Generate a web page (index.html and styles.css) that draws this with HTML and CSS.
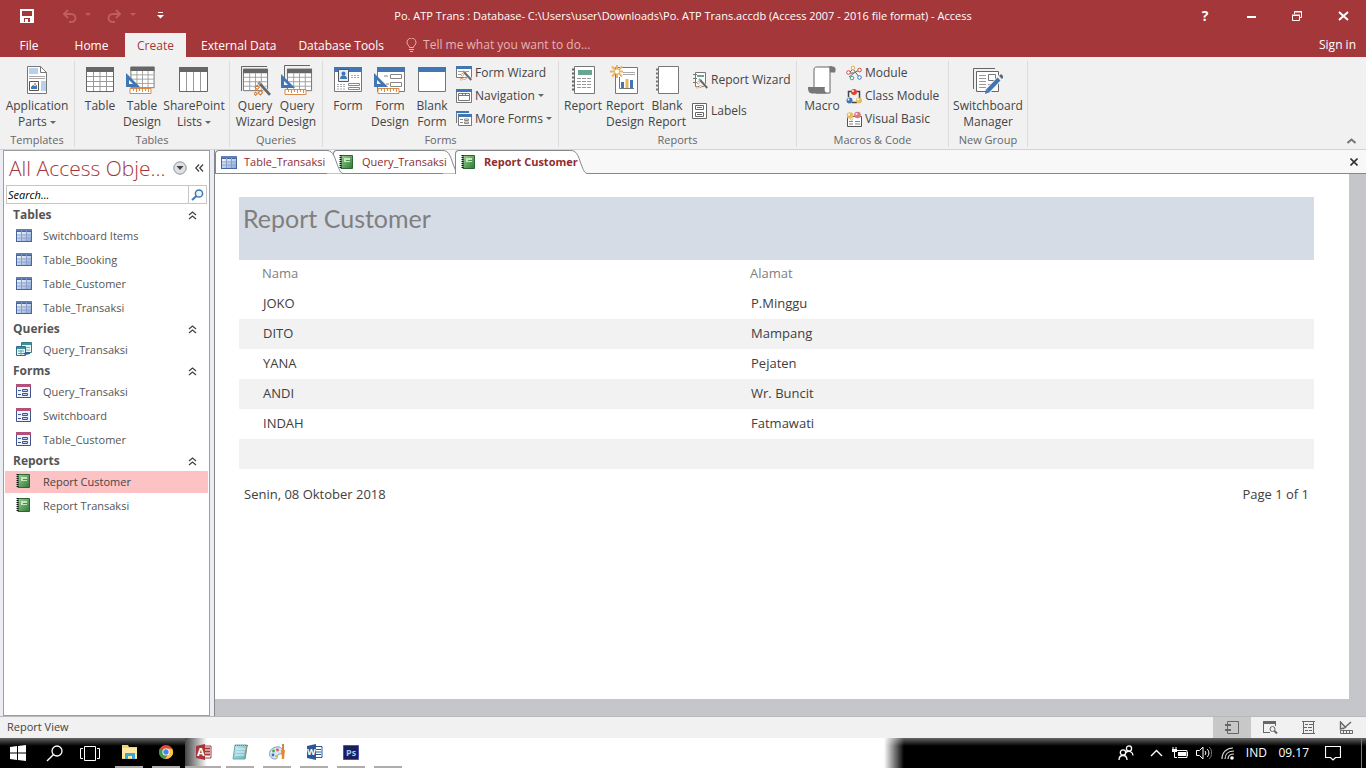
FILE: index.html
```html
<!DOCTYPE html>
<html lang="en">
<head>
<meta charset="utf-8">
<title>Po. ATP Trans : Database - Access</title>
<link rel="stylesheet" href="styles.css">
</head>
<body>
<svg class="defs" aria-hidden="true">
  <defs>
    <linearGradient id="g-blue" x1="0" y1="0" x2="1" y2="1"><stop offset="0" stop-color="#f4f8ff"/><stop offset="1" stop-color="#8ba9dc"/></linearGradient>
    <linearGradient id="g-green" x1="0" y1="0" x2="1" y2="1"><stop offset="0" stop-color="#9fce96"/><stop offset="1" stop-color="#2c7a34"/></linearGradient>
    <linearGradient id="g-pad" x1="0" y1="0" x2="1" y2="1"><stop offset="0" stop-color="#c8eef2"/><stop offset="1" stop-color="#62adbb"/></linearGradient>
  </defs>
  <symbol id="i-table" viewBox="0 0 16 13"><path d="M0 0h16v13H0z" fill="#4664a0"/><path d="M1 3h14v9H1z" fill="url(#g-blue)"/><path d="M0 1h16" stroke="#7f98c8"/><path d="M1 6h14M1 9h14M5.500 2v10M10.500 2v10" stroke="#8a9fc8" fill="none"/></symbol>
  <symbol id="i-query" viewBox="0 0 16 15"><path d="M5.500.5h10v10h-10z" fill="#eaf6f6" stroke="#2f7f87"/><path d="M6 1h9v2H6z" fill="#3b9199"/><path d="M8 5.500h6M8 8h6" stroke="#79b3b8"/><path d="M.5 4.500h9v9h-9z" fill="#eaf6f6" stroke="#2f6f87"/><path d="M1 5h8v2H1z" fill="#3b9199"/><path d="M2 9h6M2 11.500h6M5 8v5" stroke="#669eae" fill="none"/><path d="m7 11 7-1v2l-5 1z" fill="#315e9d"/></symbol>
  <symbol id="i-form" viewBox="0 0 15 14"><path d="M.5.500h14v13H.5z" fill="#f0f3fb" stroke="#3f568b"/><path d="M0 0h15v3H0z" fill="#b2517a"/><path d="M2 6.500h3M2 10.500h3" stroke="#3f568b"/><path d="M6.500 5.500h5v2h-5zM6.500 9.500h5v2h-5z" fill="#c4d2ef" stroke="#3f568b"/></symbol>
  <symbol id="i-report" viewBox="0 0 14 14"><path d="M2 .5h11.500v13H2z" fill="url(#g-green)" stroke="#2c6632"/><path d="M5 3h6v4H5z" fill="#c7e6bd"/><path d="M7 5h4v1H7z" fill="#4b8c48"/><path d="M1.500 0v14" stroke="#111" stroke-width="2" stroke-dasharray="1 1"/></symbol>
  <symbol id="i-up" viewBox="0 0 9 9"><path d="m1 4 3.500-3L8 4M1 8l3.500-3L8 8" fill="none" stroke="#444" stroke-width="1.300"/></symbol>
  <symbol id="i-grid" viewBox="0 0 30 28"><path d="M1.500 2.500h27v24h-27z" fill="#fff" stroke="#666"/><path d="M1 2h28v5H1z" fill="#666"/><path d="M2 11.500h26M2 16.500h26M2 21.500h26M8.500 7v19M15 7v19M21.500 7v19" stroke="#999" fill="none"/></symbol>
  <symbol id="i-ruler" viewBox="0 0 30 30"><path d="M0 8v14h14z" fill="#3f76b3"/><path d="M3 15v4h4z" fill="#fff"/><path d="M4 23.500h21v5H4z" fill="#fff" stroke="#d88b4b"/><path d="M7.500 24v2M10.500 24v3M13.500 24v2M16.500 24v3M19.500 24v2M22.500 24v3" stroke="#d88b4b"/></symbol>
  <symbol id="i-wand" viewBox="0 0 16 14"><path d="m5 2 10 11" stroke="#f1f1f1" stroke-width="4"/><path d="m4 1 3 3" stroke="#999" stroke-width="3"/><path d="m6 3 9 10" stroke="#666" stroke-width="2.500"/><path d="m1 6 2-2 2 2-2 2zM4 11l2-2 2 2-2 2zM0 12l1.500-1.500L3 12l-1.500 1.500z" fill="#fff" stroke="#d47a37"/></symbol>
  <symbol id="i-people" viewBox="0 0 16 16"><circle cx="5" cy="7.500" r="2.700" fill="none" stroke="#fff" stroke-width="1.300"/><path d="M1 15c0-6 8-6 8 0M8 7.500c3-3 7 0 7 3" fill="none" stroke="#fff" stroke-width="1.300"/><circle cx="11" cy="3.500" r="2.600" fill="none" stroke="#fff" stroke-width="1.300"/></symbol>
</svg>

<div class="app">
  <header class="titlebar">
    <div class="quick">
      <button aria-label="Save"><svg width="14" height="14"><path d="M1 1h12v12H1z" fill="none" stroke="#fff" stroke-width="2"/><path d="M1 7h12v6H1z" fill="#fff"/><path d="M4 9h6v4H4z" fill="#a4373a"/><path d="M5 10h3v4H5z" fill="#fff"/></svg></button>
      <button class="undo" aria-label="Undo"><svg width="30" height="14"><path d="m6 1-4 4 4 4M2 5h7c6 0 6 8 0 8H7" fill="none" stroke="#c05b5f" stroke-width="2"/><path d="M23 4h6l-3 3z" fill="#c05b5f"/></svg></button>
      <button class="redo" aria-label="Redo"><svg width="30" height="14"><path d="m9 1 4 4-4 4m4-4H6c-6 0-6 8 0 8h2" fill="none" stroke="#c05b5f" stroke-width="2"/><path d="M23 4h6l-3 3z" fill="#c05b5f"/></svg></button>
      <button class="customize" aria-label="Customize Quick Access Toolbar"><svg width="7" height="7"><path d="M1 .5h5" stroke="#fff"/><path d="M0 3h7L3.500 6.500z" fill="#fff"/></svg></button>
    </div>
    <h1 class="doc-title">Po. ATP Trans : Database- C:\Users\user\Downloads\Po. ATP Trans.accdb (Access 2007 - 2016 file format) - Access</h1>
    <div class="window-buttons">
      <button aria-label="Help" class="help">?</button>
      <button aria-label="Minimize"><svg width="10" height="10"><path d="M1 6h9" stroke="#fff" stroke-width="2"/></svg></button>
      <button aria-label="Restore"><svg width="10" height="10"><path d="M2.500 3V.5h7v6H8M2 1h8" fill="none" stroke="#fff"/><path d="M.5 4.500h7v5h-7zM0 4h8" fill="none" stroke="#fff"/></svg></button>
      <button aria-label="Close"><svg width="11" height="10"><path d="m1 1 9 8M10 1 1 9" stroke="#fff" stroke-width="2"/></svg></button>
    </div>
  </header>

  <nav class="ribbon-tabs">
    <button class="rtab file">File</button>
    <button class="rtab home">Home</button>
    <button class="rtab active">Create</button>
    <button class="rtab">External Data</button>
    <button class="rtab">Database Tools</button>
    <label class="tell"><svg width="11" height="15"><path d="M3.500 9.500C3.500 7.500 1 7 1 4.500a4 4 0 0 1 9 0C10 7 7.500 7.500 7.500 9.500z" fill="none" stroke="#e3b5b6"/><path d="M3 11.500h5M4 13.500h3" stroke="#e3b5b6"/></svg><input type="text" placeholder="Tell me what you want to do..." aria-label="Tell me what you want to do"></label>
    <a class="signin" href="#">Sign in</a>
  </nav>

  <section class="ribbon">
    <div class="group g-templates"><div class="tools">
      <button class="big wide"><svg width="30" height="30" class="ic"><path d="M5.500 1.500h13l6 6v21h-19z" fill="#fff" stroke="#777"/><path d="M18.500 1.500v6h6" fill="none" stroke="#777"/><path d="M7 3h9v6H7zM19 16h5v10h-5z" fill="#b8d0ea"/><path d="M7 11.500h16M7 13.500h16" stroke="#aaa"/><path d="M7.500 16.500h9v9h-9z" fill="#fff" stroke="#555"/><path d="M9 24v-2l2-2 2 1 2-1v4z" fill="#3f76b3"/><path d="M12 18h2v2h-2z" fill="#e5a14e"/></svg><span>Application<br>Parts <i class="caret"></i></span></button>
    </div><h2>Templates</h2></div>

    <div class="group g-tables"><div class="tools">
      <button class="big"><svg width="30" height="30" class="ic"><use href="#i-grid" width="30" height="28"/></svg><span>Table</span></button>
      <button class="big"><svg width="32" height="30" class="ic"><use href="#i-grid" x="2" width="29" height="24" preserveAspectRatio="none"/><use href="#i-ruler" width="30" height="30"/></svg><span>Table<br>Design</span></button>
      <button class="big wide"><svg width="30" height="30" class="ic"><path d="M.5 2.500h28v24H.5z" fill="#fff" stroke="#666"/><path d="M0 2h29v5H0z" fill="#666"/><path d="M7.500 7v19M14.500 7v19M21.500 7v19" stroke="#999"/></svg><span>SharePoint<br>Lists <i class="caret"></i></span></button>
    </div><h2>Tables</h2></div>

    <div class="group g-queries"><div class="tools">
      <button class="big"><svg width="32" height="32" class="ic"><path d="M2.500 26V1.500H28" fill="none" stroke="#666"/><use href="#i-grid" x="3" y="2" width="27" height="25"/><use href="#i-wand" x="15" y="16" width="17" height="15"/></svg><span>Query<br>Wizard</span></button>
      <button class="big"><svg width="32" height="32" class="ic"><path d="M3.500 20V.5H29" fill="none" stroke="#666"/><use href="#i-grid" x="5" y="2" width="27" height="25"/><use href="#i-ruler" x="0" y="1" width="30" height="30"/></svg><span>Query<br>Design</span></button>
    </div><h2>Queries</h2></div>

    <div class="group g-forms"><div class="tools">
      <button class="big"><svg width="30" height="30" class="ic"><path d="M1.500 2.500h27v24h-27z" fill="#fff" stroke="#777"/><path d="M1 2h28v5H1z" fill="#3f76b3"/><path d="M5.500 4.500h10v12h-10z" fill="#e4eef9" stroke="#555"/><circle cx="10.500" cy="8.500" r="2" fill="#3f76b3"/><path d="M7 14c0-5 7-5 7 0z" fill="#3f76b3"/><path d="M18 10.500h9M18 12.500h9M4 19.500h9M4 21.500h9M4 24h9" stroke="#aaa" stroke-dasharray="2 1"/><path d="M15.500 18.500h11v2h-11zM15.500 22.500h11v2h-11z" fill="none" stroke="#888"/></svg><span>Form</span></button>
      <button class="big"><svg width="32" height="30" class="ic"><path d="M3.500 2.500h27v24h-27z" fill="#fff" stroke="#777"/><path d="M3 2h28v5H3z" fill="#3f76b3"/><path d="M16.500 9.500h11v4h-11zM16.500 17.500h11v4h-11z" fill="none" stroke="#888"/><path d="M10 11h4M12 19h3" stroke="#888"/><use href="#i-ruler" width="30" height="30"/></svg><span>Form<br>Design</span></button>
      <button class="big"><svg width="30" height="30" class="ic"><path d="M1.500 2.500h27v24h-27z" fill="#fff" stroke="#777"/><path d="M1 2h28v5H1z" fill="#3f76b3"/></svg><span>Blank<br>Form</span></button>
      <div class="stack">
        <button class="small"><svg width="16" height="16"><path d="M.5 1.500h15v11H.5z" fill="#fff" stroke="#777"/><path d="M0 1h16v3H0z" fill="#3f76b3"/><path d="M2 6.500h5M2 9.500h3M9 6.500h4" stroke="#999"/><use href="#i-wand" x="4" y="5" width="12" height="11"/></svg>Form Wizard</button>
        <button class="small"><svg width="16" height="16"><path d="M.5 1.500h15v13H.5z" fill="#fff" stroke="#777"/><path d="M0 1h16v3H0z" fill="#3f76b3"/><path d="M2.500 5.500h11v7h-11zM3 7.500h10M6.500 6v2M9.500 6v2" fill="none" stroke="#777"/></svg>Navigation <i class="caret"></i></button>
        <button class="small"><svg width="16" height="16"><path d="M.5 12V1.500H13" fill="none" stroke="#777"/><path d="M2.500 3.500h13v11h-13z" fill="#fff" stroke="#777"/><path d="M0 0h13v2H0zM2 3h14v3H2z" fill="#3f76b3"/><path d="M4 8.500h3M4 11.500h3M8.500 8h4v1.500h-4zM8.500 11h4v1.500h-4z" fill="none" stroke="#888"/></svg>More Forms <i class="caret"></i></button>
      </div>
    </div><h2>Forms</h2></div>

    <div class="group g-reports"><div class="tools">
      <button class="big"><svg width="26" height="30" class="ic"><path d="M4.500 1.500h20v27h-20z" fill="#fff" stroke="#777"/><path d="M8 5h14v5H8z" fill="#6aa58f"/><path d="M7 13.500h15M7 16.500h15M7 19.500h15M7 22.500h15" stroke="#999" stroke-dasharray="4 1"/><path d="M2 4.500h4M2 8.500h4M2 12.500h4M2 16.500h4M2 20.500h4M2 24.500h4" stroke="#666" stroke-width="2" stroke-dasharray="3 1"/></svg><span>Report</span></button>
      <button class="big"><svg width="30" height="30" class="ic"><path d="M5.500 2.500h22v26h-22z" fill="#fff" stroke="#777"/><path d="M13 7.500h12M13 9.500h12" stroke="#aaa"/><path d="M9.500 12v11.500H24" stroke="#777" fill="none"/><path d="M11 17h3v6h-3zM20 15h3v8h-3z" fill="#3f76b3"/><path d="M15.500 14h3v9h-3z" fill="#e8b566"/><path d="M7 0v13M0 6.500h13M2 1.500l10 10M12 1.500l-10 10" stroke="#e8b566" stroke-width="2"/><circle cx="7" cy="6.500" r="2" fill="#fff"/></svg><span>Report<br>Design</span></button>
      <button class="big"><svg width="26" height="30" class="ic"><path d="M4.500 1.500h20v27h-20z" fill="#fff" stroke="#777"/><path d="M2 4.500h4M2 8.500h4M2 12.500h4M2 16.500h4M2 20.500h4M2 24.500h4" stroke="#777" stroke-width="2" stroke-dasharray="3 1"/></svg><span>Blank<br>Report</span></button>
      <div class="stack two">
        <button class="small"><svg width="16" height="18"><path d="M3.500 1.500h10v14h-10z" fill="#fff" stroke="#777"/><path d="M5 4h7v2H5z" fill="#6aa58f"/><path d="M1 3.500h4M1 7.500h4M1 11.500h4" stroke="#777"/><use href="#i-wand" x="4" y="7" width="12" height="11"/></svg>Report Wizard</button>
        <button class="small"><svg width="16" height="16"><path d="M.5.500h14v15H.5z" fill="#fff" stroke="#666"/><path d="M3.500 2.500h8v4h-8zM3.500 9.500h8v4h-8zM5 4.500h5M5 11.500h5" fill="none" stroke="#666"/></svg>Labels</button>
      </div>
    </div><h2>Reports</h2></div>

    <div class="group g-macros"><div class="tools">
      <button class="big"><svg width="30" height="30" class="ic"><path d="M7 24V5c0-3 2-3 3-3h15c-3 0-2 4-2 7v19H9z" fill="#fff" stroke="#666"/><path d="M21 1.500h5c3 0 3 4 2 6h-5c0-3 0-5-2-6zM1 22h17c-1 3 0 6 3 6.500H6c-4 0-5-2-5-6.500z" fill="#777"/></svg><span>Macro</span></button>
      <div class="stack">
        <button class="small"><svg width="16" height="16"><path d="m3 8 4-4 6 8M3 12l5-4 5-3M3 8l5 0" stroke="#666" fill="none"/><g fill="#fff"><circle cx="2.500" cy="7.500" r="1.800" stroke="#d24b38"/><circle cx="7" cy="3" r="1.800" stroke="#e0ad4f"/><circle cx="13.500" cy="5" r="1.800" stroke="#d24b38"/><circle cx="6" cy="13" r="1.800" stroke="#49a18a"/><circle cx="13.500" cy="12.500" r="1.800" stroke="#3f76b3"/></g></svg>Module</button>
        <button class="small"><svg width="16" height="16"><path d="M5 3.500H2.500V9M11 3.500h2.500V10M6 14.500h5" stroke="#444" fill="none" stroke-width="1.500"/><circle cx="8" cy="4" r="3" fill="#d9482f"/><circle cx="3.500" cy="12.500" r="3" fill="#3f76b3"/><circle cx="13" cy="12.500" r="3" fill="#e8bd5c"/><g fill="#fff"><circle cx="7" cy="3" r="1"/><circle cx="2.500" cy="11.500" r="1"/><circle cx="12" cy="11.500" r="1"/></g></svg>Class Module</button>
        <button class="small"><svg width="16" height="16"><path d="M1.500 5.500h14v10h-14z" fill="#fff" stroke="#555"/><path d="M3 10.500h4M9 10.500h5M3 13h4M9 13h5" stroke="#888"/><circle cx="4" cy="4.500" r="3.300" fill="#e8bd5c"/><circle cx="11.500" cy="4" r="3.300" fill="#df7587"/><circle cx="3" cy="3.500" r="1" fill="#fff"/><circle cx="10.500" cy="3" r="1" fill="#fff"/><path d="m4 7.500 1.500 2 1.500-2" stroke="#e8bd5c" fill="none"/></svg>Visual Basic</button>
      </div>
    </div><h2>Macros &amp; Code</h2></div>

    <div class="group g-new"><div class="tools">
      <button class="big manager"><svg width="30" height="30" class="ic"><path d="M.5 24V3.500H22" fill="none" stroke="#666"/><path d="M3.500 6.500h22v20h-22z" fill="#fff" stroke="#666"/><path d="M6 10.500h7M6 13.500h7M6 16.500h7M6 19.500h7M6 22.500h7M15 19.500h4" stroke="#999"/><path d="M15.500 9.500h7v6h-7z" fill="#fff" stroke="#777"/><path d="m28 12-14 15" stroke="#f1f1f1" stroke-width="6"/><path d="M26 14 15 25.500" stroke="#3f76b3" stroke-width="4"/><path d="m27.500 12.500 2-2" stroke="#666" stroke-width="4"/><path d="m13 24 4 3-5 2z" fill="#3f76b3"/></svg><span>Switchboard<br>Manager</span></button>
    </div><h2>New Group</h2></div>
    <button class="collapse" aria-label="Collapse the ribbon"><svg width="9" height="6"><path d="m.5 5 4-3.500 4 3.500" fill="none" stroke="#777" stroke-width="2"/></svg></button>
  </section>

  <div class="workspace">
    <aside class="nav">
      <div class="nav-head"><h2>All Access Obje...</h2>
        <button aria-label="Navigation options"><svg width="14" height="14"><circle cx="7" cy="7" r="6.200" fill="#dfe0e3" stroke="#8d9096"/><path d="M3.500 5h7L7 9z" fill="#444"/></svg></button>
        <button aria-label="Shutter bar"><svg width="9" height="8"><path d="M4 .5.800 4 4 7.500M8 .5 4.800 4 8 7.500" fill="none" stroke="#444" stroke-width="1.300"/></svg></button>
      </div>
      <div class="search"><input type="text" placeholder="Search..." aria-label="Search"><button aria-label="Search"><svg width="13" height="12"><circle cx="8" cy="4.500" r="3.600" fill="#eef5fc" stroke="#3f76b3" stroke-width="1.500"/><path d="M5.500 7 1 11" stroke="#3f76b3" stroke-width="2"/></svg></button></div>
      <h3>Tables<svg width="9" height="9"><use href="#i-up"/></svg></h3>
      <ul>
        <li><a href="#"><svg width="16" height="15"><use href="#i-table" height="13"/></svg>Switchboard Items</a></li>
        <li><a href="#"><svg width="16" height="15"><use href="#i-table" height="13"/></svg>Table_Booking</a></li>
        <li><a href="#"><svg width="16" height="15"><use href="#i-table" height="13"/></svg>Table_Customer</a></li>
        <li><a href="#"><svg width="16" height="15"><use href="#i-table" height="13"/></svg>Table_Transaksi</a></li>
      </ul>
      <h3>Queries<svg width="9" height="9"><use href="#i-up"/></svg></h3>
      <ul><li><a href="#"><svg width="16" height="16"><use href="#i-query" height="15"/></svg>Query_Transaksi</a></li></ul>
      <h3>Forms<svg width="9" height="9"><use href="#i-up"/></svg></h3>
      <ul>
        <li><a href="#"><svg width="16" height="16"><use href="#i-form" width="15" height="14"/></svg>Query_Transaksi</a></li>
        <li><a href="#"><svg width="16" height="16"><use href="#i-form" width="15" height="14"/></svg>Switchboard</a></li>
        <li><a href="#"><svg width="16" height="16"><use href="#i-form" width="15" height="14"/></svg>Table_Customer</a></li>
      </ul>
      <h3>Reports<svg width="9" height="9"><use href="#i-up"/></svg></h3>
      <ul>
        <li><a href="#" class="selected"><svg width="16" height="16"><use href="#i-report" width="14" height="14"/></svg>Report Customer</a></li>
        <li><a href="#"><svg width="16" height="16"><use href="#i-report" width="14" height="14"/></svg>Report Transaksi</a></li>
      </ul>
    </aside>

    <main class="document">
      <div class="doc-tabs">
        <button class="dtab first"><svg width="16" height="13"><use href="#i-table"/></svg><span>Table_Transaksi</span><svg class="edge" width="18" height="24"><path d="M0 .5c7 0 8 9 11 16 2 5 3 7 6 7H0z" fill="#fff"/><path d="M0 .5c7 0 8 9 11 16 2 5 3 7 6 7" fill="none" stroke="#85888c"/></svg></button>
        <button class="dtab"><svg width="14" height="14"><use href="#i-report"/></svg><span>Query_Transaksi</span><svg class="edge" width="18" height="24"><path d="M0 .5c7 0 8 9 11 16 2 5 3 7 6 7H0z" fill="#fff"/><path d="M0 .5c7 0 8 9 11 16 2 5 3 7 6 7" fill="none" stroke="#85888c"/></svg></button>
        <button class="dtab current"><svg width="14" height="14"><use href="#i-report"/></svg><span>Report Customer</span><svg class="edge" width="18" height="24"><path d="M0 .5c7 0 8 9 11 16 2 5 3 7 6 7V24H0z" fill="#fff"/><path d="M0 .5c7 0 8 9 11 16 2 5 3 7 6 7" fill="none" stroke="#85888c"/></svg></button>
        <button class="close-doc" aria-label="Close document"><svg width="8" height="8"><path d="m.5.500 7 7M7.500.5l-7 7" stroke="#333" stroke-width="1.600"/></svg></button>
      </div>
      <div class="canvas">
        <article class="page">
          <h2 class="report-title">Report Customer</h2>
          <table>
            <colgroup><col class="c-name"><col></colgroup>
            <thead><tr><th scope="col">Nama</th><th scope="col">Alamat</th></tr></thead>
            <tbody>
              <tr><td>JOKO</td><td>P.Minggu</td></tr>
              <tr><td>DITO</td><td>Mampang</td></tr>
              <tr><td>YANA</td><td>Pejaten</td></tr>
              <tr><td>ANDI</td><td>Wr. Buncit</td></tr>
              <tr><td>INDAH</td><td>Fatmawati</td></tr>
              <tr><td></td><td></td></tr>
            </tbody>
          </table>
          <footer><span>Senin, 08 Oktober 2018</span><span>Page 1 of 1</span></footer>
        </article>
      </div>
    </main>
  </div>

  <footer class="status"><span>Report View</span>
    <div class="views">
      <button class="on" aria-label="Report View"><svg width="14" height="14"><path d="M2.500.5h11v12h-11z" fill="none" stroke="#666"/><path d="M0 4h6M0 9h6" stroke="#666" stroke-width="2"/></svg></button>
      <button aria-label="Print Preview"><svg width="15" height="13"><path d="M.5 11.500V.5h12V5M0 11.500h7" fill="none" stroke="#666"/><path d="M0 0h13v3H0z" fill="#666"/><circle cx="9.500" cy="8" r="2.500" fill="none" stroke="#666"/><path d="m11.500 10 2.500 2.500" stroke="#666" stroke-width="2"/></svg></button>
      <button aria-label="Layout View"><svg width="13" height="13"><path d="M0 .5h13M0 12.500h13M1.500 0v13M11.500 0v13M3 3.500h3M6 6.500h4M1 6.500h4M7 3.500h4M3 9.500h3M7 9.500h3" stroke="#666"/></svg></button>
      <button aria-label="Design View"><svg width="15" height="14"><path d="M1.500 8V1l5 5.500zM4 8l8-7" fill="none" stroke="#666" stroke-width="1.400"/><path d="M1.500 9.500h12v3h-12zM4.500 10v2M7.500 10v2M10.500 10v2" fill="none" stroke="#666"/></svg></button>
    </div>
  </footer>

  <div class="taskbar">
    <div class="glow"></div>
    <div class="launch">
      <button aria-label="Start"><svg width="16" height="16"><path d="m0 2 7-1v6.500H0zM8 1l8-1v7.500H8zM0 8.500h7V15l-7-1zM8 8.500h8V16l-8-1z" fill="#fff"/></svg></button>
      <button aria-label="Search"><svg width="17" height="17"><circle cx="11" cy="6" r="5" fill="none" stroke="#fff" stroke-width="1.300"/><path d="M7.500 9.500 1 16" stroke="#fff" stroke-width="1.500"/></svg></button>
      <button aria-label="Task View"><svg width="20" height="15"><path d="M4.500.5h11v14h-11zM3 2.500H.5v10H3M17 2.500h2.500v10H17" fill="none" stroke="#fff"/></svg></button>
    </div>
    <div class="apps">
      <button aria-label="File Explorer"><svg width="17" height="16"><path d="M1 1h6l1 2h8v12H1z" fill="#f3d376"/><path d="M1 4h15v10H1z" fill="#ffe9a0"/><path d="M4 15V9h10v6h-3v-3H7v3z" fill="#3ba5dc"/></svg></button>
      <button aria-label="Chrome"><svg width="16" height="16"><circle cx="8" cy="8" r="7" fill="#e34b3d"/><path d="M1.900 4.500 8 8l-1 7A7 7 0 0 1 1.900 4.500" fill="#3e9b52"/><path d="M8 4.700h6.200A7 7 0 0 1 7 15l3.500-5z" fill="#f4c934"/><circle cx="8" cy="8" r="3.600" fill="#fff"/><circle cx="8" cy="8" r="2.700" fill="#4784e8"/></svg></button>
      <button class="focused" aria-label="Access"><svg width="17" height="16"><path d="M8 2h8v12H8z" fill="#fff" stroke="#a4373a"/><path d="M9 4.500h6M9 7.500h6M9 10.500h6" stroke="#a4373a" stroke-width="2"/><path d="m1 2 9-2v16l-9-2z" fill="#a4373a"/><text x="2" y="12" class="logo">A</text></svg></button>
      <button aria-label="Notepad"><svg width="17" height="16"><path d="M3 1h12l-2 14H1z" fill="url(#g-pad)" stroke="#6aa8b4"/><path d="M4 5h9M3.500 8h9M3 11h9" stroke="#dff5f8"/><path d="M3 1.500h13" stroke="#777" stroke-dasharray="1 1"/><path d="m15 2-2 13" stroke="#9b8d66"/></svg></button>
      <button aria-label="Paint"><svg width="17" height="16"><path d="M7 3c5-1 8 3 6 6-1 2-3 0-4 2s0 4-3 4c-7 0-8-10 1-12z" fill="#d5e6f2" stroke="#7aa3bf"/><circle cx="4.500" cy="7" r="1.400" fill="#4ca64b"/><circle cx="8.500" cy="6" r="1.400" fill="#e4524a"/><circle cx="4" cy="11" r="1.400" fill="#3672c6"/><circle cx="7.500" cy="12" r="1.300" fill="#e6b93c"/><path d="M14 0v6" stroke="#bf8b4f" stroke-width="2"/><path d="M12 6h4l-1 9h-2z" fill="#e98730"/></svg></button>
      <button aria-label="Word"><svg width="17" height="16"><path d="M8 2.500h8v11H8z" fill="#fff" stroke="#2b579a"/><path d="M10 5.500h5M10 8h5M10 10.500h5" stroke="#2b579a"/><path d="m1 2 9-2v16l-9-2z" fill="#2b579a"/><text x="1" y="11" class="logo w">W</text></svg></button>
      <button aria-label="Photoshop"><svg width="16" height="16"><path d="M.5 1.500h15v14H.5z" fill="#1b1d5c" stroke="#4b55b5"/><text x="3" y="12" class="logo ps">Ps</text></svg></button>
      <button aria-label="Running application"></button>
    </div>
    <div class="tray">
      <button class="people" aria-label="People"><svg width="16" height="16"><use href="#i-people"/></svg></button>
      <button class="chev" aria-label="Show hidden icons"><svg width="13" height="8"><path d="m1 7 5.500-5.500L12 7" fill="none" stroke="#fff" stroke-width="1.400"/></svg></button>
      <button aria-label="Battery"><svg width="17" height="12"><path d="M4 3.500h11v7H6" fill="none" stroke="#fff"/><path d="M6 5h8v4H6zM15 5h1v4h-1z" fill="#fff"/><path d="M1 0v3M4 0v3" stroke="#fff"/><path d="M0 2h5v3H0z" fill="#fff"/><path d="M2.500 4v6.500H5" fill="none" stroke="#fff"/></svg></button>
      <button aria-label="Volume"><svg width="16" height="14"><path d="M.5 4.500h3L7 1v12L3.500 9.500h-3z" fill="none" stroke="#fff"/><path d="M9 5c1 1 1 3 0 4M11 3c2.500 2 2.500 6 0 8" fill="none" stroke="#fff"/><path d="M13 1c3.500 3 3.500 9 0 12" fill="none" stroke="#777"/></svg></button>
      <button aria-label="Network"><svg width="14" height="13"><path d="M1 12C1 5 6 1 12 1M4 12c0-5 3.500-8 9-8M7 12c0-3 2-5 6-5" fill="none" stroke="#ddd" stroke-width="1.200"/><circle cx="11" cy="11" r="1.800" fill="#fff"/></svg></button>
      <button class="lang">IND</button>
      <time>09.17</time>
      <button class="note" aria-label="Notifications"><svg width="16" height="17"><path d="M.5 1.500h15v11h-5L8 15l-2.500-2.500h-5z" fill="none" stroke="#fff" stroke-width="1.200"/></svg></button>
      <i class="desk"></i>
    </div>
  </div>
</div>
</body>
</html>
```
FILE: styles.css
```css
* { box-sizing: border-box; }
html, body { margin: 0; height: 100%; }
body { font: 12px/16px "Open Sans", "Noto Sans", sans-serif; color: #444; background: #fff; }
button, input { font: inherit; color: inherit; background: none; border: 0; padding: 0; margin: 0; }
h1, h2, h3, ul { margin: 0; padding: 0; font: inherit; list-style: none; }
a { color: inherit; text-decoration: none; }
svg { display: block; flex: none; }
.defs { position: absolute; width: 0; height: 0; }
.app { display: flex; flex-direction: column; height: 100vh; overflow: hidden; }

.titlebar { display: flex; align-items: center; height: 33px; padding-bottom: 2px; background: #a4373a; color: #fff; }
.quick { display: flex; align-items: center; flex: 1 1 0; padding-left: 20px; }
.undo { margin-left: 28px; }
.redo { margin-left: 15px; }
.customize { margin-left: 20px; }
.doc-title { white-space: nowrap; font-size: 11px; padding-right: 20px; }
.window-buttons { display: flex; flex: 1 1 0; justify-content: flex-end; }
.window-buttons button { display: flex; align-items: center; justify-content: center; width: 46px; height: 30px; }
.window-buttons .help { font-size: 14px; font-weight: 700; }

.ribbon-tabs { display: flex; height: 24px; background: #a4373a; color: #fff; line-height: 24px; }
.rtab { padding: 0 11px; line-height: 23px; }
.rtab.file { width: 58px; }
.rtab.home { width: 67px; padding: 0; }
.rtab.active { width: 61px; padding: 0; margin-right: 4px; background: #f1f1f1; color: #a4373a; }
.tell { display: flex; align-items: center; gap: 6px; padding-left: 11px; }
.tell input { width: 220px; }
.tell input::placeholder { color: #e3b5b6; opacity: 1; }
.signin { margin-left: auto; padding-right: 10px; }

.ribbon { display: flex; height: 93px; background: #f1f1f1; border-bottom: 1px solid #d2d2d2; padding-top: 4px; flex: none; }
.group { display: flex; flex-direction: column; height: 86px; border-right: 1px solid #dcdcdc; }
.group h2 { text-align: center; color: #666; font-size: 11px; line-height: 14px; }
.tools { display: flex; height: 72px; padding: 0 4px; flex: none; }
.g-templates { width: 75px; }
.g-templates .tools { padding-left: 6px; }
.g-tables { width: 155px; }
.g-queries { width: 93px; }
.g-forms { width: 236px; }
.g-reports { width: 238px; }
.g-reports .tools { padding-left: 3px; }
.g-macros { width: 152px; }
.g-new { width: 79px; }
.big { display: flex; flex-direction: column; align-items: center; width: 42px; flex: none; padding-top: 3px; white-space: nowrap; }
.big.wide { width: 62px; }
.big.manager { width: 70px; }
.big .ic { height: 34px; padding-top: 1px; }
.caret { display: inline-block; border: 3px solid transparent; border-top-color: #666; border-bottom: 0; vertical-align: middle; }
.stack { display: flex; flex-direction: column; padding-left: 3px; }
.stack.two { padding: 7px 0 0 4px; gap: 8px; }
.small { display: flex; align-items: center; gap: 3px; height: 23px; white-space: nowrap; }
.collapse { margin-left: auto; align-self: flex-end; padding: 0 10px 5px; }

.workspace { display: flex; flex: 1; min-height: 0; background: #ebedf2; border-bottom: 1px solid #b9b9bb; }
.nav { width: 207px; margin: 0 4px 0 3px; background: #fff; border: 1px solid #9c9ea2; flex: none; color: #555; font-size: 11px; }
.nav-head { display: flex; align-items: center; justify-content: space-between; height: 34px; padding: 0 5px; }
.nav-head h2 { color: #a4373a; font-size: 21px; line-height: 34px; white-space: nowrap; font-weight: 300; }
.search { display: flex; height: 19px; margin: 0 2px; border: 1px solid #c6c6c6; }
.search input { flex: 1; min-width: 0; padding-left: 1px; font-style: italic; }
.search input::placeholder { color: #000; opacity: 1; }
.search button { border-left: 1px solid #c6c6c6; padding: 0 2px; }
.nav h3 { display: flex; align-items: center; justify-content: space-between; height: 18px; padding: 0 12px 0 9px; font-size: 12px; font-weight: 700; }
.nav h3:first-of-type { margin-top: 2px; }
.nav li { height: 24px; padding: 1px 0; }
.nav a { display: flex; align-items: center; height: 22px; gap: 11px; padding-left: 11px; margin: 0 1px; }
.nav .selected { background: #fcc2c4; color: #444; }

.document { display: flex; flex-direction: column; flex: 1; min-width: 0; border-left: 1px solid #85888c; }
.doc-tabs { display: flex; height: 24px; flex: none; background: #f8f8f8; box-shadow: inset 0 -1px #85888c; font-size: 11px; color: #8f2c30; }
.dtab { position: relative; display: flex; align-items: center; height: 24px; width: 112px; margin-right: 6px; padding-left: 5px; border: 1px solid #85888c; border-right: 0; border-radius: 4px 0 0 0; background: #fff; white-space: nowrap; gap: 7px; }
.dtab span { position: relative; z-index: 1; }
.dtab:not(.first) { gap: 9px; }
.dtab.first { z-index: 2; }
.dtab:nth-child(2) { width: 110px; margin-right: 12px; }
.dtab.current { z-index: 3; width: 116px; border-bottom: 0; padding-bottom: 1px; font-weight: 700; }
.edge { position: absolute; left: 100%; top: -1px; }
.close-doc { margin-left: auto; padding-right: 8px; }
.canvas { flex: 1; background: #c5c6c9; padding: 0 17px 17px 0; display: flex; }
.page { flex: 1; background: #fff; padding: 23px 35px 0 24px; font-size: 13px; line-height: 18px; color: #404040; }
.report-title { height: 63px; padding: 4px; background: #d6dce5; color: #7f7f7f; font: 25px/34px Lato, sans-serif; }
table { width: 100%; table-layout: fixed; border-collapse: collapse; }
.c-name { width: 45.4%; }
th, td { height: 30px; padding: 0 24px 2px; text-align: left; font-weight: 400; }
th { height: 29px; color: #7f7f7f; padding: 0 23px 3px; }
tbody tr:nth-child(even) { background: #f2f2f2; }
.page footer { display: flex; justify-content: space-between; padding: 16px 5px; }

.status { display: flex; justify-content: space-between; height: 21px; flex: none; background: #f1f1f1; font-size: 11px; line-height: 20px; padding-left: 7px; }
.views { display: flex; padding-right: 1px; }
.views button { display: flex; align-items: center; justify-content: center; width: 38px; }
.views .on { background: #c8c8c8; }

.taskbar { position: relative; display: flex; height: 30px; flex: none; background: linear-gradient(#666, #000 8px); color: #fff; }
.glow { position: absolute; left: 185px; right: 462px; top: 0; bottom: 0; background: linear-gradient(90deg, #444, #fff 22px, #fff calc(100% - 20px), transparent); }
.launch, .apps, .tray { position: relative; display: flex; }
.launch button { width: 36px; }
.apps { padding-left: 7px; gap: 9px; }
.apps button { width: 28px; border-bottom: 2px solid #b0acab; }
.apps .focused { width: 36px; margin: 0 -4px; }
.taskbar button { display: flex; align-items: center; justify-content: center; }
.logo { font: 700 11px "Open Sans", sans-serif; fill: #fff; }
.logo.w { font-size: 9px; }
.logo.ps { font-size: 9px; fill: #8fd0f5; }
.tray { margin-left: auto; align-items: center; }
.tray button { width: 24px; height: 30px; }
.tray .people { margin-right: 6px; }
.tray .lang { width: 32px; }
.tray time { padding: 0 6px; }
.tray .note { width: 36px; margin-right: 10px; }
.desk { width: 1px; height: 30px; background: #777; margin-right: 4px; }
```
